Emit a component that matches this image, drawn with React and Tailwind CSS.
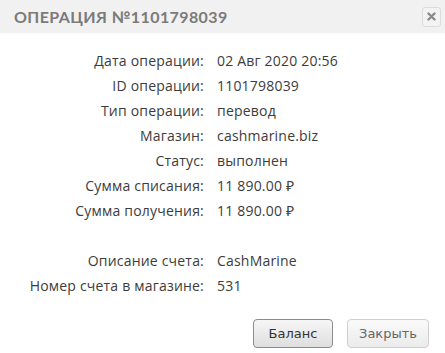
export default function App() {
  const rows = [
    ["Дата операции:", "02 Авг 2020 20:56"],
    ["ID операции:", "1101798039"],
    ["Тип операции:", "перевод"],
    ["Магазин:", "cashmarine.biz"],
    ["Статус:", "выполнен"],
    ["Сумма списания:", "11 890.00 ₽"],
    ["Сумма получения:", "11 890.00 ₽"],
    ["", ""],
    ["Описание счета:", "CashMarine"],
    ["Номер счета в магазине:", "531"],
  ];
  return (
    <div className="w-[445px] h-[353px] bg-white flex flex-col overflow-hidden">
      <div className="h-[33px] bg-[#f1f1f1] flex items-center justify-between pl-[14px] pr-[4px]">
        <div className="text-[16px] font-bold tracking-[0.4px] text-[#7a7a7a]" style={{ fontFamily: "Lato, sans-serif" }}>
          ОПЕРАЦИЯ №1101798039
        </div>
        <div className="w-[19px] h-[20px] border border-[#dcdcdc] rounded-[3px] bg-[#f3f3f3] flex items-center justify-center">
          <svg width="9" height="9" viewBox="0 0 9 9">
            <path d="M1.5 1.5 L7.5 7.5 M7.5 1.5 L1.5 7.5" stroke="#8a8a8a" strokeWidth="2.4" strokeLinecap="round" />
          </svg>
        </div>
      </div>
      <div className="pt-[15px] grid grid-cols-[204px_1fr] gap-x-[13px] text-[14px] tracking-[0.2px] text-[#3c3c3c]" style={{ fontFamily: "'Open Sans', sans-serif" }}>
        {rows.map(([l, v], i) => (
          <div key={i} className="contents">
            <div className="text-right leading-[25px] h-[25px] whitespace-nowrap">{l}</div>
            <div className="leading-[25px] h-[25px] whitespace-nowrap">{v}</div>
          </div>
        ))}
      </div>
      <div className="flex justify-end gap-[14px] pr-[16px] mt-[21px]" style={{ fontFamily: "'DejaVu Sans', sans-serif" }}>
        <button className="w-[80px] h-[29px] rounded-[4px] border border-[#8c8c8c] bg-gradient-to-b from-[#f7f7f7] to-[#dedede] text-[13px] text-[#333]">
          Баланс
        </button>
        <button className="w-[82px] h-[29px] rounded-[4px] border border-[#d0d0d0] bg-gradient-to-b from-[#fafafa] to-[#ebebeb] text-[13px] text-[#666]">
          Закрыть
        </button>
      </div>
    </div>
  );
}
